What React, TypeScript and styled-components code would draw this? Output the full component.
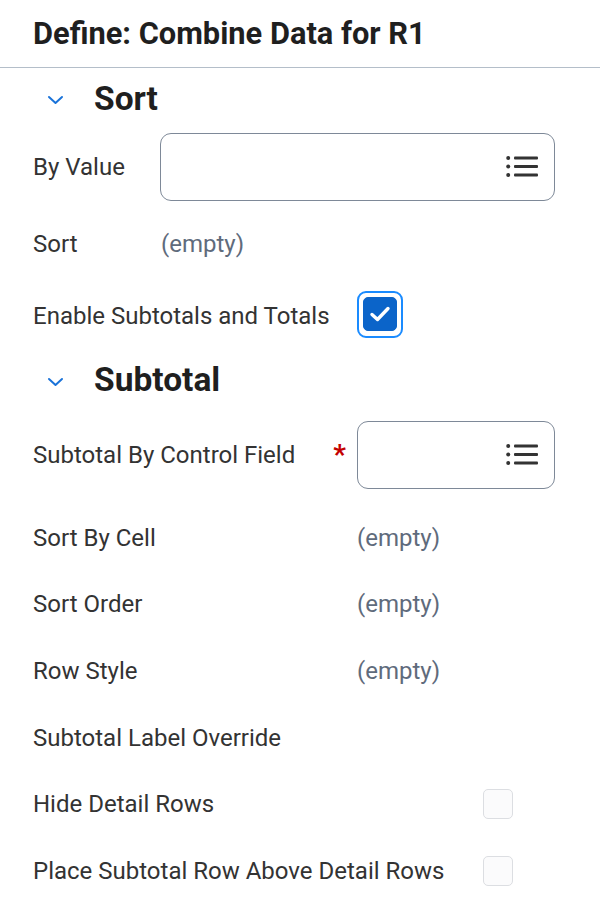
import React from "react";
import styled, { createGlobalStyle } from "styled-components";

const GlobalStyle = createGlobalStyle`
  body {
    margin: 0;
    background: #ffffff;
    font-family: Roboto, "Liberation Sans", sans-serif;
    color: #333333;
  }
`;

const Panel = styled.div`
  width: 600px;
`;

const Header = styled.div`
  height: 68px;
  display: flex;
  align-items: center;
  padding: 0 33px;
  border-bottom: 1px solid #b4bec9;
  box-sizing: border-box;
`;

const Title = styled.h1`
  margin: 0;
  font-size: 30.8px;
  font-weight: 700;
  color: #1f1f1f;
`;

const SectionHeader = styled.div<{ $height: number }>`
  height: ${({ $height }) => $height}px;
  display: flex;
  align-items: center;
  padding-left: 47px;
`;

const Chevron = styled.svg`
  width: 17px;
  height: 10px;
  margin-right: 30px;
  margin-top: 4px;
`;

const SectionTitle = styled.h2`
  margin: 0;
  font-size: 33.5px;
  font-weight: 700;
  color: #1f1f1f;
`;

const FieldRow = styled.div<{ $label: number; $height?: number }>`
  display: grid;
  grid-template-columns: ${({ $label }) => $label}px 1fr;
  align-items: center;
  padding: 0 45px 0 33px;
  min-height: ${({ $height }) => $height ?? 66.6}px;
`;

const Label = styled.div`
  font-size: 24px;
  color: #333333;
  position: relative;
`;

const Required = styled.span`
  position: absolute;
  right: 11px;
  top: -3px;
  color: #c40000;
  font-size: 28px;
  font-weight: 700;
`;

const EmptyValue = styled.div`
  font-size: 24px;
  color: #5f6b7c;
`;

const Prompt = styled.div`
  height: 68px;
  border: 1px solid #7e8998;
  border-radius: 11px;
  box-sizing: border-box;
  display: flex;
  align-items: center;
  justify-content: flex-end;
  padding-right: 15px;
`;

const CheckRing = styled.div`
  width: 46px;
  height: 47px;
  margin-top: -3px;
  border: 2px solid #1a8bff;
  border-radius: 9px;
  box-sizing: border-box;
  display: flex;
  align-items: center;
  justify-content: center;
`;

const CheckBox = styled.div<{ $checked?: boolean }>`
  width: ${({ $checked }) => ($checked ? 34 : 30)}px;
  height: ${({ $checked }) => ($checked ? 34 : 30)}px;
  border-radius: 5px;
  box-sizing: border-box;
  background: ${({ $checked }) => ($checked ? "#0b64c9" : "#fbfbfc")};
  border: 1px solid ${({ $checked }) => ($checked ? "#0b64c9" : "#dcdee2")};
  display: flex;
  align-items: center;
  justify-content: center;
`;

const Spacer = styled.div<{ $h: number }>`
  height: ${({ $h }) => $h}px;
`;

const ChevronDown = () => (
  <Chevron viewBox="0 0 17 10">
    <path d="M2 2 L8.5 8 L15 2" fill="none" stroke="#1a73d9" strokeWidth="2" strokeLinecap="round" strokeLinejoin="round" />
  </Chevron>
);

const ListIcon = () => (
  <svg width="33" height="22" viewBox="0 0 33 22">
    {[2, 10.5, 19].map((y) => (
      <g key={y}>
        <circle cx="2.2" cy={y} r="2" fill="#333" />
        <rect x="8" y={y - 1.4} width="24" height="2.8" rx="1" fill="#333" />
      </g>
    ))}
  </svg>
);

const Check = () => (
  <svg width="22" height="18" viewBox="0 0 22 18">
    <path d="M3 9.5 L8.5 14.5 L19 3.5" fill="none" stroke="#fff" strokeWidth="3.4" strokeLinecap="round" strokeLinejoin="round" />
  </svg>
);

const emptyRows = ["Sort By Cell", "Sort Order", "Row Style"];

export default function App() {
  return (
    <Panel>
      <GlobalStyle />
      <Header>
        <Title>Define: Combine Data for R1</Title>
      </Header>

      <SectionHeader $height={60}>
        <ChevronDown />
        <SectionTitle>Sort</SectionTitle>
      </SectionHeader>
      <Spacer $h={5} />
      <FieldRow $label={127} $height={68}>
        <Label>By Value</Label>
        <Prompt>
          <ListIcon />
        </Prompt>
      </FieldRow>
      <Spacer $h={10} />
      <FieldRow $label={128}>
        <Label>Sort</Label>
        <EmptyValue>(empty)</EmptyValue>
      </FieldRow>
      <FieldRow $label={324} $height={76}>
        <Label>Enable Subtotals and Totals</Label>
        <CheckRing>
          <CheckBox $checked>
            <Check />
          </CheckBox>
        </CheckRing>
      </FieldRow>

      <SectionHeader $height={52}>
        <ChevronDown />
        <SectionTitle>Subtotal</SectionTitle>
      </SectionHeader>
      <Spacer $h={15} />
      <FieldRow $label={324} $height={67}>
        <Label>
          Subtotal By Control Field
          <Required>*</Required>
        </Label>
        <Prompt>
          <ListIcon />
        </Prompt>
      </FieldRow>
      <Spacer $h={16} />
      {emptyRows.map((name) => (
        <FieldRow key={name} $label={324}>
          <Label>{name}</Label>
          <EmptyValue>(empty)</EmptyValue>
        </FieldRow>
      ))}
      <FieldRow $label={450}>
        <Label>Subtotal Label Override</Label>
        <div />
      </FieldRow>
      <FieldRow $label={450}>
        <Label>Hide Detail Rows</Label>
        <CheckBox />
      </FieldRow>
      <FieldRow $label={450}>
        <Label>Place Subtotal Row Above Detail Rows</Label>
        <CheckBox />
      </FieldRow>
    </Panel>
  );
}
